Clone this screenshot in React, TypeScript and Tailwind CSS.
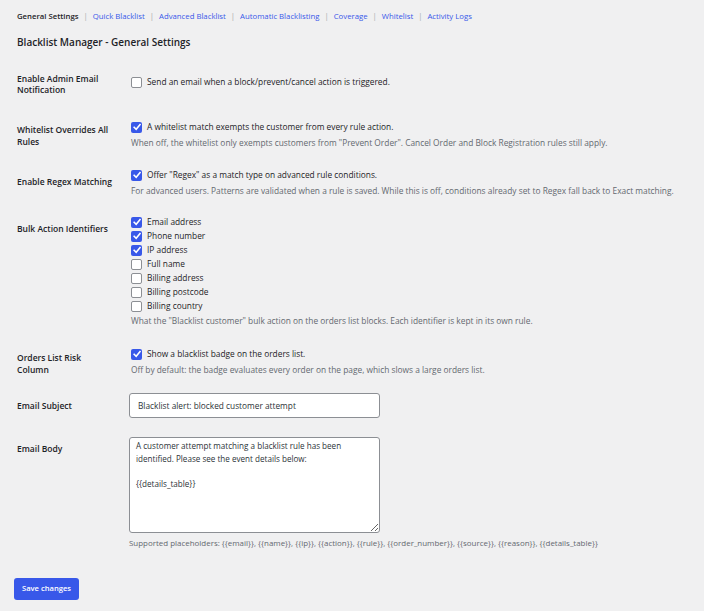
import React from 'react'

const tabs = ['Quick Blacklist', 'Advanced Blacklist', 'Automatic Blacklisting', 'Coverage', 'Whitelist', 'Activity Logs']

const identifiers: [string, boolean][] = [
  ['Email address', true],
  ['Phone number', true],
  ['IP address', true],
  ['Full name', false],
  ['Billing address', false],
  ['Billing postcode', false],
  ['Billing country', false],
]

function Check({ checked }: { checked: boolean }) {
  if (checked) {
    return (
      <span className="flex h-[11px] w-[11px] shrink-0 items-center justify-center rounded-[2px] bg-[#3858e9]">
        <svg viewBox="0 0 12 12" className="h-[10px] w-[10px]">
          <path d="M2.6 6.4 L5 8.7 L9.6 3.2" fill="none" stroke="#fff" strokeWidth="1.9" strokeLinecap="square" />
        </svg>
      </span>
    )
  }
  return <span className="h-[11px] w-[11px] shrink-0 rounded-[2px] border border-[#8c8f94] bg-white" />
}

function CheckLine({ checked, label }: { checked: boolean; label: string }) {
  return (
    <label className="ml-[2px] flex h-[12px] items-center gap-[5px] text-[#1d2327]">
      <Check checked={checked} />
      <span>{label}</span>
    </label>
  )
}

function Desc({ children, className = '' }: { children: React.ReactNode; className?: string }) {
  return <p className={`ml-[2px] leading-[12px] text-[#646970] ${className}`}>{children}</p>
}

function Row({ label, labelPt, className, children }: { label: React.ReactNode; labelPt: string; className: string; children: React.ReactNode }) {
  return (
    <div className={`flex ${className}`}>
      <div className={`w-[112px] shrink-0 whitespace-nowrap text-[8.5px] font-semibold leading-[11.5px] text-[#1d2327] ${labelPt}`}>{label}</div>
      <div className="min-w-0 flex-1">{children}</div>
    </div>
  )
}

export default function App() {
  return (
    <div className="min-h-screen bg-[#f0f0f1] pl-[17px] pt-[10px] font-['Open_Sans',sans-serif] text-[8.35px] text-[#3c434a]">
      <nav className="flex h-[12px] items-center text-[7.75px] leading-[12px]">
        <span className="font-semibold text-[#1d2327]">General Settings</span>
        {tabs.map((t) => (
          <span key={t} className="flex items-center">
            <span className="px-[5px] text-[#a7aaad]">|</span>
            <a href="#" className="text-[#3858e9]">{t}</a>
          </span>
        ))}
      </nav>

      <h1 className="mt-[13px] text-[10px] font-semibold leading-[14px] text-[#1d2327]">Blacklist Manager - General Settings</h1>

      <Row label={<>Enable Admin Email<br />Notification</>} labelPt="pt-0" className="mt-[23.5px]">
        <div className="pt-[4px]">
          <CheckLine checked={false} label="Send an email when a block/prevent/cancel action is triggered." />
        </div>
      </Row>

      <Row label={<>Whitelist Overrides All<br />Rules</>} labelPt="pt-[3px]" className="mt-[25.5px]">
        <CheckLine checked={true} label="A whitelist match exempts the customer from every rule action." />
        <Desc className="mt-[4px]">When off, the whitelist only exempts customers from "Prevent Order". Cancel Order and Block Registration rules still apply.</Desc>
      </Row>

      <Row label="Enable Regex Matching" labelPt="pt-[7px]" className="mt-[20px]">
        <CheckLine checked={true} label={'Offer "Regex" as a match type on advanced rule conditions.'} />
        <Desc className="mt-[4px]">For advanced users. Patterns are validated when a rule is saved. While this is off, conditions already set to Regex fall back to Exact matching.</Desc>
      </Row>

      <Row label="Bulk Action Identifiers" labelPt="pt-[8px]" className="mt-[18px]">
        <div className="flex flex-col gap-[2px] pt-[1px]">
          {identifiers.map(([l, c]) => (
            <CheckLine key={l} checked={c} label={l} />
          ))}
        </div>
        <Desc className="mt-[3px]">What the "Blacklist customer" bulk action on the orders list blocks. Each identifier is kept in its own rule.</Desc>
      </Row>

      <Row label={<>Orders List Risk<br />Column</>} labelPt="pt-[4px]" className="mt-[21px]">
        <CheckLine checked={true} label="Show a blacklist badge on the orders list." />
        <Desc className="mt-[4px]">Off by default: the badge evaluates every order on the page, which slows a large orders list.</Desc>
      </Row>

      <Row label="Email Subject" labelPt="pt-[7px]" className="mt-[17px]">
        <input
          type="text"
          defaultValue="Blacklist alert: blocked customer attempt"
          className="block h-[25px] w-[251px] rounded-[3px] border border-[#8c8f94] bg-white px-[8px] text-[8.3px] text-[#2c3338] outline-none"
        />
      </Row>

      <Row label="Email Body" labelPt="pt-[6px]" className="mt-[19px]">
        <textarea
          defaultValue={'A customer attempt matching a blacklist rule has been identified. Please see the event details below:\n\n{{details_table}}'}
          className="block h-[96px] w-[251px] rounded-[3px] border border-[#8c8f94] bg-white py-[2px] pl-[6px] pr-[20px] text-[8.1px] leading-[12.8px] text-[#2c3338] outline-none"
        />
        <p className="mt-[4px] text-[7.95px] leading-[12px] text-[#646970]">
          Supported placeholders: {'{{email}}, {{name}}, {{ip}}, {{action}}, {{rule}}, {{order_number}}, {{source}}, {{reason}}, {{details_table}}'}
        </p>
      </Row>

      <button
        type="button"
        className="-ml-[3px] mt-[29px] h-[22px] w-[65px] rounded-[3px] bg-[#3858e9] text-[7.6px] font-semibold text-white"
      >
        Save changes
      </button>
    </div>
  )
}
